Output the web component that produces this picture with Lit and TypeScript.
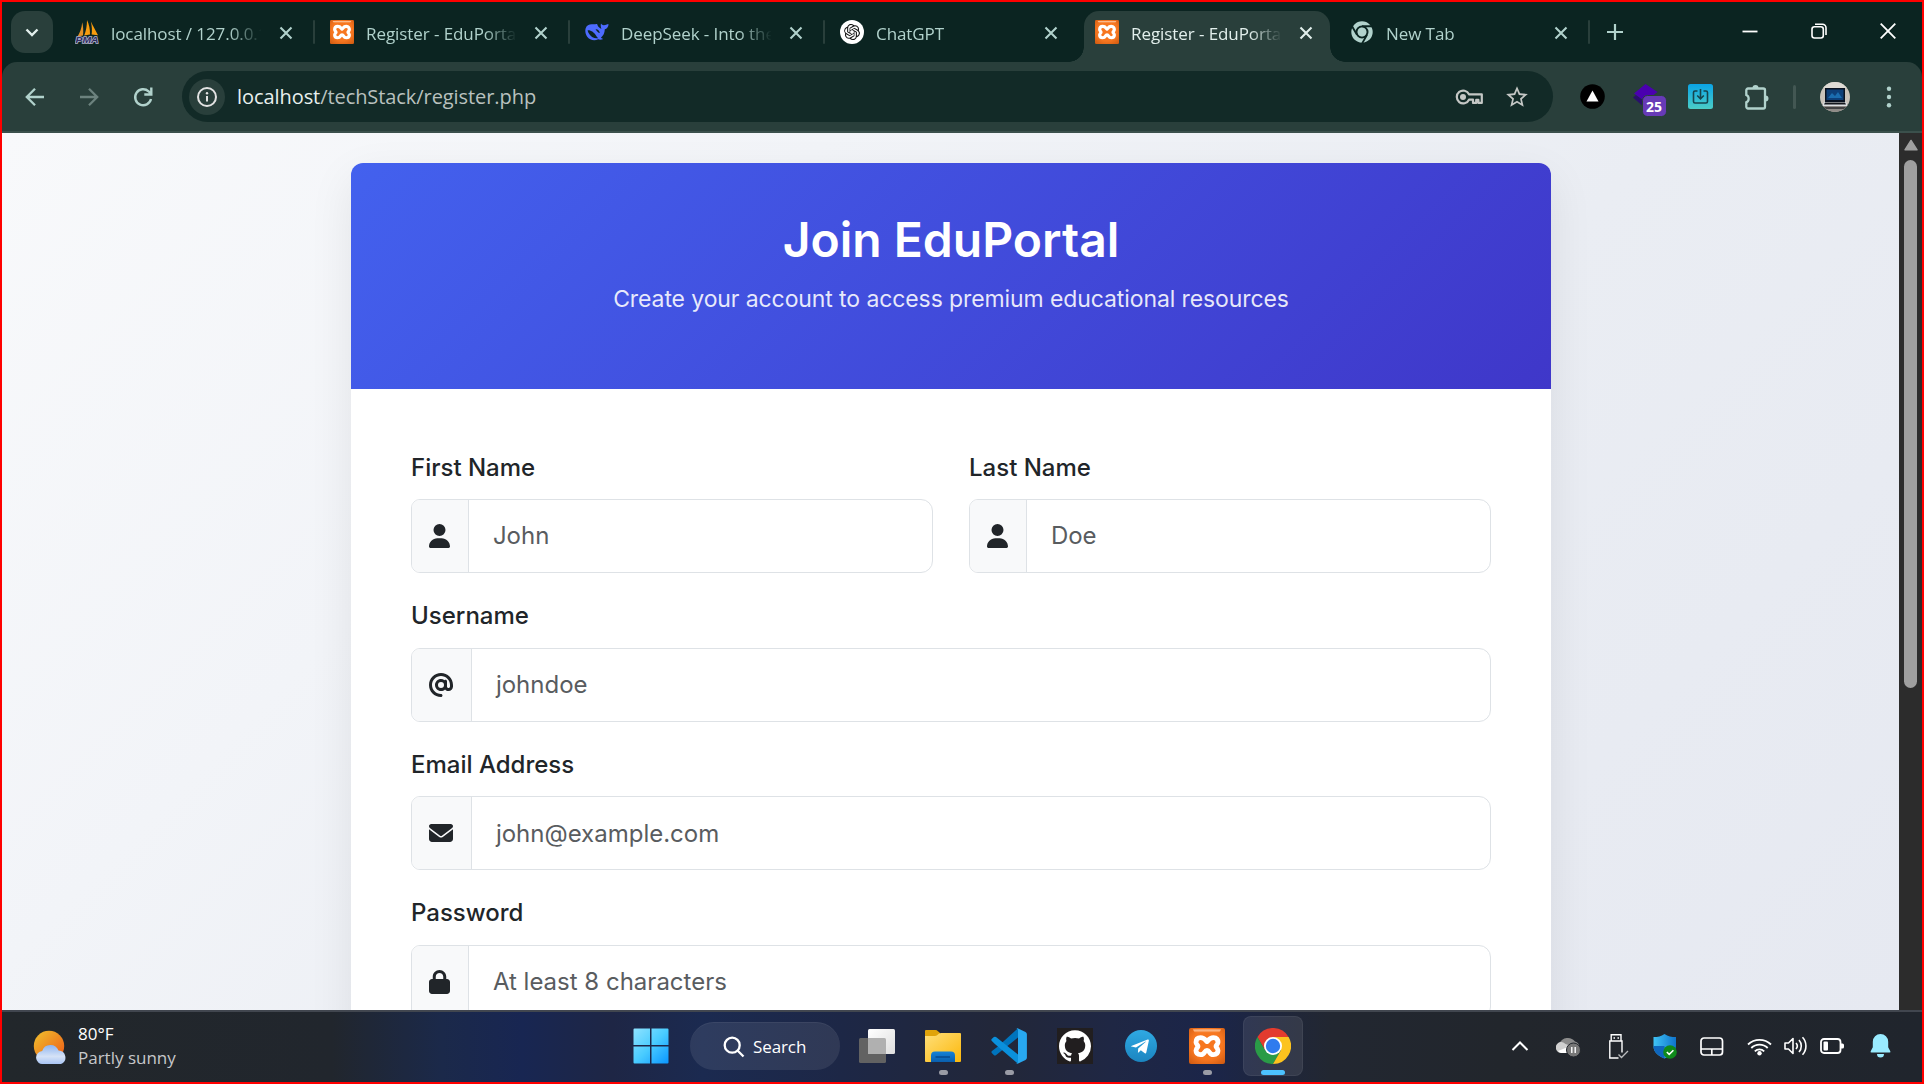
import { LitElement, html, css, svg, nothing } from "lit";
import { customElement, property } from "lit/decorators.js";

const uiFont = css`"Segoe UI", "Open Sans", "Noto Sans", sans-serif`;

const xamppIcon = (size: number) => html`<svg width=${size} height=${size} viewBox="0 0 36 36">
  <defs>
    <radialGradient id="xo" cx="50%" cy="45%" r="70%"><stop offset=".6" stop-color="#f77720" /><stop offset="1" stop-color="#d25c12" /></radialGradient>
    <linearGradient id="xs" x2="0" y2="1"><stop offset="0" stop-color="#fbc9a4" /><stop offset="1" stop-color="#f98a3c" /></linearGradient>
  </defs>
  <rect width="36" height="36" rx="2" fill="url(#xo)" />
  <path d="M4 1.6h28l-1.5 2.6h-25z" fill="url(#xs)" />
  <path d="M18 13.6C16.4 12.6 16 9.6 11.6 9.6C8 9.6 7 12 7 14.2C7 16.4 9 17 9 18.2C9 19.4 7 20.4 7 22.6C7 25 8.4 26.6 11.6 26.6C16.2 26.6 15 22.4 18 22.4S19.8 26.6 24.4 26.6C27.6 26.6 29 25 29 22.6C29 20.4 27 19.4 27 18.2C27 17 29 16.4 29 14.2C29 12 28 9.6 24.4 9.6C20 9.6 19.6 12.6 18 13.6Z" fill="none" stroke="#fff" stroke-width="4.8" stroke-linejoin="round" />
</svg>`;

const pmaIcon = html`<svg width="24" height="24" viewBox="0 0 24 24">
  <path d="M7.2 2.2C6.8 8 4.8 13 2.6 16.4L8 15.6C8.6 11 8.2 6 7.2 2.2Z" fill="#e39128" />
  <path d="M12 0C12 6 11 11 9.2 15.6L15 14.6C15.2 9 14 4 12 0Z" fill="#f89c0e" />
  <path d="M15.8 1.4C17 6 17.2 11 16.6 14.6L23 15.2C21 11 18 6 15.8 1.4Z" fill="#f89c0e" />
  <g font-family="'Liberation Sans', sans-serif" font-size="9.6" font-weight="700" font-style="italic"><text x="0.5" y="23.4" textLength="23" lengthAdjust="spacingAndGlyphs" fill="#2e2c63" stroke="#b4b4cc" stroke-width="1.5" paint-order="stroke">PMA</text></g>
</svg>`;

const deepseekIcon = html`<svg width="24" height="24" viewBox="0 0 24 24">
  <path d="M.6 8.4C1.6 4.9 5 3.7 8.4 4.3C9.9 4.6 10.6 3.7 11.8 4C12.9 4.4 12.3 5.4 13.2 6.4C14.2 7.6 15.6 8.2 16.4 9C15.8 7.4 15.4 5.4 16 3.6C16.8 4.9 17.8 5.4 19 5.3C20.6 5 22 4.2 23.6 4.3C23.4 6.9 22 8.9 19.8 9.3C19.8 12.9 18.2 15.9 15.9 17.7C16.8 18.3 17.6 18.5 18.2 19C16.6 19.9 14.4 19.9 13.2 19.3C9.4 21.3 4.6 20.1 2.2 16.8C.4 14.3-.1 11.1.6 8.4Z" fill="#4d6bfe" />
  <path d="M2.6 10.4C5.6 9.9 9.4 12.6 11 15.6C11.7 16.8 12.2 17.6 13.2 18.2C9.2 18.9 6.4 17 4.6 14.6C3.6 13.2 2.8 11.8 2.6 10.4Z" fill="#0b2421" />
  <path d="M10.6 9.4C12.6 9.1 14.4 10.8 14.8 12.9C13.6 13.1 13.2 12.2 12.3 11.5Z" fill="#0b2421" />
</svg>`;

const chatgptIcon = html`<svg width="24" height="24" viewBox="0 0 24 24">
  <circle cx="12" cy="12" r="12" fill="#fff" />
  <g transform="translate(4 4) scale(.667)"><path fill="#111" d="M22.2819 9.8211a5.9847 5.9847 0 0 0-.5157-4.9108 6.0462 6.0462 0 0 0-6.5098-2.9A6.0651 6.0651 0 0 0 4.9807 4.1818a5.9847 5.9847 0 0 0-3.9977 2.9 6.0462 6.0462 0 0 0 .7427 7.0966 5.98 5.98 0 0 0 .511 4.9107 6.051 6.051 0 0 0 6.5146 2.9001A5.9847 5.9847 0 0 0 13.2599 24a6.0557 6.0557 0 0 0 5.7718-4.2058 5.9894 5.9894 0 0 0 3.9977-2.9001 6.0557 6.0557 0 0 0-.7475-7.0729zm-9.022 12.6081a4.4755 4.4755 0 0 1-2.8764-1.0408l.1419-.0804 4.7783-2.7582a.7948.7948 0 0 0 .3927-.6813v-6.7369l2.02 1.1686a.071.071 0 0 1 .038.052v5.5826a4.504 4.504 0 0 1-4.4945 4.4944zm-9.6607-4.1254a4.4708 4.4708 0 0 1-.5346-3.0137l.142.0852 4.783 2.7582a.7712.7712 0 0 0 .7806 0l5.8428-3.3685v2.3324a.0804.0804 0 0 1-.0332.0615L9.74 19.9502a4.4992 4.4992 0 0 1-6.1408-1.6464zM2.3408 7.8956a4.485 4.485 0 0 1 2.3655-1.9728V11.6a.7664.7664 0 0 0 .3879.6765l5.8144 3.3543-2.0201 1.1685a.0757.0757 0 0 1-.071 0l-4.8303-2.7865A4.504 4.504 0 0 1 2.3408 7.872zm16.5963 3.8558L13.1038 8.364 15.1192 7.2a.0757.0757 0 0 1 .071 0l4.8303 2.7913a4.4944 4.4944 0 0 1-.6765 8.1042v-5.6772a.79.79 0 0 0-.407-.667zm2.0107-3.0231l-.142-.0852-4.7735-2.7818a.7759.7759 0 0 0-.7854 0L9.409 9.2297V6.8974a.0662.0662 0 0 1 .0284-.0615l4.8303-2.7866a4.4992 4.4992 0 0 1 6.6802 4.66zM8.3065 12.863l-2.02-1.1638a.0804.0804 0 0 1-.038-.0567V6.0742a4.4992 4.4992 0 0 1 7.3757-3.4537l-.142.0805L8.704 5.459a.7948.7948 0 0 0-.3927.6813zm1.0976-2.3654l2.602-1.4998 2.6069 1.4998v2.9994l-2.5974 1.4997-2.6067-1.4997Z" /></g>
</svg>`;

const chromeMonoIcon = html`<svg width="24" height="24" viewBox="0 0 24 24">
  <circle cx="12" cy="12" r="10.7" fill="#b1d2cc" />
  <circle cx="12" cy="12" r="5.5" fill="#b1d2cc" stroke="#0b2421" stroke-width="2" />
  <path d="M12 6.2H22.6M7 14.9L1.9 6M17 14.9L12 23.6" stroke="#0b2421" stroke-width="1.9" fill="none" />
  <circle cx="12" cy="12" r="4.2" fill="#b1d2cc" />
</svg>`;

const closeX = html`<svg width="24" height="24" viewBox="0 0 24 24"><path d="M6.5 6.5l11 11M17.5 6.5l-11 11" stroke="currentColor" stroke-width="2.1" fill="none" /></svg>`;

@customElement("browser-tab")
class BrowserTab extends LitElement {
  @property() label = "";
  @property({ attribute: false }) icon: unknown = nothing;
  @property({ type: Boolean, reflect: true }) active = false;
  @property({ type: Boolean }) divider = false;

  static styles = css`
    :host { display: flex; width: 255px; height: 60px; flex: none; box-sizing: border-box; color: #b1d2cc; font-family: ${uiFont}; }
    .body { display: flex; align-items: center; flex: 1; height: 42px; margin: 9px 4px 9px 5px; padding-left: 11px; }
    :host([active]) { color: #e2efec; }
    :host([active]) .body { position: relative; height: 51px; margin-bottom: 0; background: #293f3b; border-radius: 15px 15px 0 0; padding-bottom: 9px; box-sizing: border-box; }
    :host([active]) .body::before, :host([active]) .body::after { content: ""; position: absolute; bottom: 0; width: 15px; height: 15px; }
    :host([active]) .body::before { left: -15px; background: radial-gradient(circle at 0 0, transparent 14.5px, #293f3b 15px); }
    :host([active]) .body::after { right: -15px; background: radial-gradient(circle at 100% 0, transparent 14.5px, #293f3b 15px); }
    .icon { display: flex; width: 24px; flex: none; }
    .label { width: 150px; margin-left: 12px; margin-top: 3px; font-size: 17px; line-height: 24px; letter-spacing: -0.08px; white-space: nowrap; overflow: hidden; -webkit-mask-image: linear-gradient(90deg, #000 118px, transparent 151px); mask-image: linear-gradient(90deg, #000 118px, transparent 151px); }
    .close { display: flex; margin-left: 13px; margin-top: 1px; }
    .line { width: 2px; height: 24px; margin: 18px -1px 0 -1px; background: #293f3b; border-radius: 1px; position: relative; }
  `;

  render() {
    return html`<div class="body"><span class="icon">${this.icon}</span><span class="label">${this.label}</span><span class="close">${closeX}</span></div>
      ${this.divider ? html`<span class="line"></span>` : nothing}`;
  }
}

const tabs = [
  { label: "localhost / 127.0.0.1", icon: pmaIcon, divider: true },
  { label: "Register - EduPortal", icon: xamppIcon(24), divider: true },
  { label: "DeepSeek - Into the", icon: deepseekIcon, divider: true },
  { label: "ChatGPT", icon: chatgptIcon },
  { label: "Register - EduPortal", icon: xamppIcon(24), active: true },
  { label: "New Tab", icon: chromeMonoIcon, divider: true },
];

@customElement("browser-chrome")
class BrowserChrome extends LitElement {
  static styles = css`
    :host { display: block; height: 131px; background: #0b2421; font-family: ${uiFont}; }
    svg { display: block; flex: none; }
    .strip { display: flex; height: 60px; }
    .menu { width: 42px; height: 42px; margin: 9px 6px 0 9px; border-radius: 14px; background: #293f3b; display: flex; align-items: center; justify-content: center; color: #e2efec; flex: none; }
    .plus { margin: 18px 0 0 14px; color: #b1d2cc; }
    .win { display: flex; margin-left: auto; color: #fff; }
    .win span { width: 69px; height: 58px; display: flex; align-items: center; justify-content: center; }
    .bar { display: flex; align-items: center; height: 71px; box-sizing: border-box; background: #293f3b; border-radius: 15px 15px 0 0; border-bottom: 2px solid #3b504c; padding-left: 18px; color: #b1d2cc; }
    .nav { display: flex; width: 162px; gap: 24px; }
    .nav svg { width: 30px; height: 30px; }
    .omni { display: flex; align-items: center; width: 1371px; height: 51px; border-radius: 26px; background: #122a27; flex: none; box-sizing: border-box; padding: 0 23px 0 7px; color: #c4c7c5; }
    .info { width: 36px; height: 36px; border-radius: 50%; background: #293f3b; display: flex; align-items: center; justify-content: center; color: #e3e3e3; }
    .url { margin-left: 12px; font-size: 20px; line-height: 30px; letter-spacing: -0.07px; color: #b9c1bf; flex: 1; white-space: nowrap; }
    .url b { font-weight: 400; color: #e8f0ee; }
    .key { margin-right: 21px; }
    .ext { display: flex; align-items: center; flex: 1; }
    .e1 { margin-left: 27px; }
    .e2 { margin-left: 28px; margin-top: 6px; }
    .e3 { margin-left: 21px; }
    .e4 { margin-left: 30px; }
    .sep { width: 3px; height: 24px; background: #435753; margin-left: 24px; border-radius: 2px; }
    .e5 { margin-left: 24px; }
    .e6 { margin-left: 36px; }
  `;

  render() {
    return html`
      <div class="strip">
        <div class="menu"><svg width="24" height="24" viewBox="0 0 24 24"><path d="M6.5 9.5l5.5 5.5 5.5-5.5" stroke="currentColor" stroke-width="2.4" fill="none" /></svg></div>
        ${tabs.map((t) => html`<browser-tab .label=${t.label} .icon=${t.icon} ?active=${!!t.active} ?divider=${!!t.divider}></browser-tab>`)}
        <svg class="plus" width="24" height="24" viewBox="0 0 24 24"><path d="M12 4v16M4 12h16" stroke="currentColor" stroke-width="2.2" /></svg>
        <div class="win">
          <span><svg width="16" height="16" viewBox="0 0 16 16"><path d="M.5 8.5h15" stroke="currentColor" stroke-width="1.8" /></svg></span>
          <span><svg width="16" height="16" viewBox="0 0 16 16" fill="none" stroke="currentColor" stroke-width="1.6"><rect x="1" y="3.7" width="11.3" height="11.3" rx="2.5" /><path d="M4 1.2h7.500a3.500 3.500 0 0 1 3.500 3.500V12" /></svg></span>
          <span><svg width="16" height="16" viewBox="0 0 16 16"><path d="M.7 .7l14.600 14.600M15.300 .7L.7 15.300" stroke="currentColor" stroke-width="1.8" /></svg></span>
        </div>
      </div>
      <div class="bar">
        <div class="nav">
          <svg viewBox="0 0 30 30" fill="none" stroke="currentColor" stroke-width="2.3"><path d="M24 15H7.500M15 6.800L6.800 15l8.200 8.200" /></svg>
          <svg viewBox="0 0 30 30" fill="none" stroke="#6c827e" stroke-width="2.3"><path d="M6 15h16.500M15 6.800l8.200 8.200-8.200 8.200" /></svg>
          <svg viewBox="0 0 30 30" fill="none" stroke="currentColor" stroke-width="2.4"><path d="M23 17a8 8 0 1 1-2.400-7.700l2 2.200M23.300 5.500v7h-7" /></svg>
        </div>
        <div class="omni">
          <span class="info"><svg width="22" height="22" viewBox="0 0 22 22"><circle cx="11" cy="11" r="9" fill="none" stroke="currentColor" stroke-width="2" /><path d="M11 10v5.500" stroke="currentColor" stroke-width="2" /><circle cx="11" cy="7.2" r="1.2" fill="currentColor" /></svg></span>
          <span class="url"><b>localhost</b>/techStack/register.php</span>
          <svg class="key" width="28" height="18" viewBox="0 0 28 18" fill="none" stroke="currentColor" stroke-width="2.2"><path d="M14 6.300A6.400 6.400 0 1 0 14 11.700H18V14.900H21.200V11.900H23.400V14.900H26.800V6.300Z" stroke-linejoin="round" /><circle cx="8" cy="9" r="3" fill="currentColor" stroke="none" /></svg>
          <svg width="26" height="26" viewBox="0 0 24 24"><path fill="currentColor" d="M22 9.240l-7.190-.62L12 2 9.190 8.630 2 9.240l5.460 4.730L5.820 21 12 17.270 18.180 21l-1.630-7.030L22 9.240zM12 15.400l-3.760 2.270 1-4.280-3.320-2.880 4.380-.38L12 6.100l1.710 4.040 4.380.38-3.320 2.880 1 4.280L12 15.400z" /></svg>
        </div>
        <div class="ext">
          <svg class="e1" width="25" height="25" viewBox="0 0 25 25"><circle cx="12.5" cy="12.5" r="12.3" /><path d="M12.500 6.500l6 11h-12z" fill="#fff" /></svg>
          <svg class="e2" width="34" height="34" viewBox="0 0 34 34"><path d="M0 14.500L3 12l12 9 5-3-8 7z" fill="#2a0f6e" /><path d="M1 10.500L12.500 1 24.500 9 12 18.500z" fill="#4a00b0" /><rect x="9.5" y="12.5" width="24" height="21" rx="5" fill="#673ab7" stroke="#293f3b" /><text x="21" y="28.6" text-anchor="middle" font-family="'Segoe UI', 'Open Sans', sans-serif" font-size="14" font-weight="700" fill="#fff">25</text></svg>
          <svg class="e3" width="25" height="25" viewBox="0 0 25 25"><defs><linearGradient id="g" x2="0" y2="1"><stop offset="0" stop-color="#0aa4e6" /><stop offset="1" stop-color="#4bcdc6" /></linearGradient></defs><rect width="25" height="25" rx="2.5" fill="url(#g)" /><path d="M9.500 7H7a1.500 1.500 0 0 0-1.500 1.500v9A1.500 1.500 0 0 0 7 19h11a1.500 1.500 0 0 0 1.500-1.500v-9A1.500 1.500 0 0 0 18 7h-2.500M12.500 5v9.500M9.200 11.500l3.300 3.300 3.300-3.300" fill="none" stroke="#17444e" stroke-width="1.6" /></svg>
          <svg class="e4" width="26" height="26" viewBox="0 0 26 26"><path d="M3.300 6.200a1.700 1.700 0 0 1 1.700-1.700H20.300a1.700 1.700 0 0 1 1.700 1.700V22.800a1.700 1.700 0 0 1-1.700 1.700H5a1.700 1.700 0 0 1-1.700-1.700V18.300a4 4 0 0 0 0-7.300Z" fill="none" stroke="currentColor" stroke-width="2.3" /><path d="M9.500 4a3 3 0 0 1 6 0zM22.500 11.500a3 3 0 0 1 0 6z" fill="currentColor" /></svg>
          <span class="sep"></span>
          <svg class="e5" width="30" height="30" viewBox="0 0 30 30"><defs><clipPath id="c"><circle cx="15" cy="15" r="15" /></clipPath></defs><g clip-path="url(#c)"><rect width="30" height="30" fill="#c9c3bb" /><rect y="0" width="30" height="6" fill="#dedad4" /><rect y="22" width="30" height="8" fill="#8f8b87" /><rect x="5" y="6" width="20" height="14" fill="#0a1220" /><rect x="6.5" y="7.5" width="17" height="10.5" fill="#0d3f78" /><path d="M8 16l4-5 3 3 3-4 4 6z" fill="#1a6cae" /><path d="M4 20h22l2 4H2z" fill="#dfe0e3" /><path d="M5 20.500h20l1 2H4z" fill="#15171c" /><path d="M2 26h26" stroke="#2a2a2c" stroke-width="1.5" /></g></svg>
          <svg class="e6" width="6" height="24" viewBox="0 0 6 24" fill="currentColor"><circle cx="3" cy="3.7" r="2.2" /><circle cx="3" cy="12" r="2.2" /><circle cx="3" cy="20.3" r="2.2" /></svg>
        </div>
      </div>`;
  }
}

const fieldIcons: Record<string, { w: number; path: string }> = {
  user: { w: 448, path: "M224 256A128 128 0 1 0 224 0a128 128 0 1 0 0 256zm-45.7 48C79.8 304 0 383.8 0 482.3C0 498.7 13.3 512 29.7 512H418.3c16.4 0 29.7-13.3 29.7-29.7C448 383.8 368.2 304 269.7 304H178.3z" },
  at: { w: 512, path: "M256 64C150 64 64 150 64 256s86 192 192 192c17.7 0 32 14.3 32 32s-14.3 32-32 32C114.6 512 0 397.4 0 256S114.6 0 256 0S512 114.6 512 256v32c0 53-43 96-96 96c-29.3 0-55.6-13.2-73.2-33.9C320 371.1 289.5 384 256 384c-70.7 0-128-57.3-128-128s57.3-128 128-128c27.9 0 53.7 8.9 74.7 24.1c5.7-5 13.1-8.1 21.3-8.1c17.7 0 32 14.3 32 32v80 32c0 17.7 14.3 32 32 32s32-14.3 32-32V256c0-106-86-192-192-192zm64 192a64 64 0 1 0-128 0 64 64 0 1 0 128 0z" },
  envelope: { w: 512, path: "M48 64C21.5 64 0 85.5 0 112c0 15.1 7.1 29.3 19.2 38.4L236.8 313.6c11.4 8.5 27 8.5 38.4 0L492.8 150.4c12.1-9.1 19.2-23.3 19.2-38.4c0-26.5-21.5-48-48-48H48zM0 176V384c0 35.3 28.7 64 64 64H448c35.3 0 64-28.7 64-64V176L294.4 339.2c-22.8 17.1-54 17.1-76.8 0L0 176z" },
  lock: { w: 448, path: "M144 144v48H304V144c0-44.2-35.8-80-80-80s-80 35.8-80 80zM80 192V144C80 64.5 144.5 0 224 0s144 64.5 144 144v48h16c35.3 0 64 28.7 64 64V448c0 35.3-28.7 64-64 64H64c-35.3 0-64-28.7-64-64V256c0-35.3 28.7-64 64-64H80z" },
};

@customElement("form-field")
class FormField extends LitElement {
  @property() label = "";
  @property() hint = "";
  @property() icon = "user";

  static styles = css`
    :host { display: block; flex: 1; font-family: Inter, sans-serif; font-size: 24px; }
    .label { font-weight: 500; line-height: 36px; color: #212529; margin-bottom: 13.4px; }
    .group { display: flex; height: 74px; box-sizing: border-box; border: 1px solid #dee2e6; border-radius: 9px 12px 12px 9px; overflow: hidden; background: #fff; }
    .addon { display: flex; align-items: center; padding: 0 17.500px 0 17.400px; background: #f8f9fa; border-right: 1px solid #dee2e6; }
    .hint { display: flex; align-items: center; padding-left: 24px; color: #595c5f; }
  `;

  render() {
    const ic = fieldIcons[this.icon];
    return html`<div class="label">${this.label}</div>
      <div class="group"><span class="addon"><svg width=${(ic.w / 512) * 24} height="24" viewBox="0 0 ${ic.w} 512">${svg`<path d=${ic.path} fill="#212529"/>`}</svg></span><span class="hint">${this.hint}</span></div>`;
  }
}

@customElement("register-page")
class RegisterPage extends LitElement {
  static styles = css`
    :host { display: flex; flex: 1; min-height: 0; overflow: hidden; font-family: Inter, sans-serif; }
    .view { flex: 1; overflow: hidden; background: linear-gradient(135deg, #f8f9fb 0%, #f2f4f8 30%, #eaedf3 60%, #e6e9f1 100%); padding: 30px 348px 0 349px; }
    .card { width: 1200px; height: 1400px; background: #fff; border-radius: 12px; box-shadow: 0 15px 45px rgba(0, 0, 0, 0.08); overflow: hidden; }
    header { height: 226px; box-sizing: border-box; padding-top: 48px; text-align: center; background: linear-gradient(135deg, #4361ee, #3f37c9); color: #fff; }
    h1 { margin: 0 0 12px; font-size: 48px; line-height: 57.6px; font-weight: 600; }
    p { margin: 0; font-size: 23px; line-height: 36px; letter-spacing: -0.1px; color: rgba(255, 255, 255, 0.88); }
    form { display: flex; flex-direction: column; gap: 25.2px; padding: 60.6px 60px; }
    .row { display: flex; gap: 36px; }
    .scroll { width: 23px; background: #2c2c2c; display: flex; flex-direction: column; align-items: center; }
    .scroll svg { display: block; margin-top: 6px; }
    .thumb { width: 13px; height: 528px; margin-top: 9px; border-radius: 7px; background: #9f9f9f; }
  `;

  render() {
    return html`
      <div class="view"><div class="card">
        <header><h1>Join EduPortal</h1><p>Create your account to access premium educational resources</p></header>
        <form>
          <div class="row"><form-field label="First Name" hint="John" icon="user"></form-field><form-field label="Last Name" hint="Doe" icon="user"></form-field></div>
          <form-field label="Username" hint="johndoe" icon="at"></form-field>
          <form-field label="Email Address" hint="john@example.com" icon="envelope"></form-field>
          <form-field label="Password" hint="At least 8 characters" icon="lock"></form-field>
        </form>
      </div></div>
      <div class="scroll"><svg width="14" height="12" viewBox="0 0 14 12"><path d="M7 1.500L13 10.800H1z" fill="#9f9f9f" stroke="#9f9f9f" stroke-width="1.5" stroke-linejoin="round" /></svg><div class="thumb"></div></div>`;
  }
}

const startIcon = html`<svg width="36" height="36" viewBox="0 0 36 36"><defs><linearGradient id="s" x2="1" y2="1"><stop offset="0" stop-color="#8fe3ff" /><stop offset=".5" stop-color="#4accff" /><stop offset="1" stop-color="#0a96ff" /></linearGradient></defs><path d="M1.500 .5h15.500v16.500H.5V1.500a1 1 0 0 1 1-1zM18.500 .5h16a1 1 0 0 1 1 1v15.500h-17zM.5 18.500h16.500v17h-15.500a1 1 0 0 1-1-1zM18.500 18.500h17v16a1 1 0 0 1-1 1h-16z" fill="url(#s)" /></svg>`;
const taskViewIcon = html`<svg width="36" height="34" viewBox="0 0 36 34"><defs><linearGradient id="a" x2="1" y2="1"><stop offset="0" stop-color="#fff" /><stop offset="1" stop-color="#dedede" /></linearGradient></defs><rect y="9" width="27" height="25" rx="1.5" fill="#626262" /><rect x="9" y="0" width="27" height="25" rx="1.5" fill="url(#a)" /><path d="M9 9h16.500a1.500 1.500 0 0 1 1.500 1.500V25H9z" fill="#b0b0b0" /></svg>`;
const folderIcon = html`<svg width="36" height="32" viewBox="0 0 36 32"><defs><linearGradient id="f" x2="1" y2="1"><stop offset="0" stop-color="#ffdf7a" /><stop offset="1" stop-color="#fcb80b" /></linearGradient><linearGradient id="b" x2="0" y2="1"><stop offset="0" stop-color="#1683d8" /><stop offset="1" stop-color="#0a5fae" /></linearGradient></defs><path d="M0 1a1 1 0 0 1 1-1h9.500c2 0 3 2 4.500 3v4H0z" fill="#e0a30a" /><path d="M0 6h10c3 0 3-3 6-3h19a1 1 0 0 1 1 1v27a1 1 0 0 1-1 1H1a1 1 0 0 1-1-1z" fill="url(#f)" /><path d="M6 32V25.500a4 4 0 0 1 4-4h16a4 4 0 0 1 4 4V32z" fill="url(#b)" /><path d="M10.500 27h14.500" stroke="#084a8e" stroke-width="1.5" /></svg>`;
const vscodeIcon = html`<svg width="36" height="36" viewBox="0 0 36 36"><path d="M27 9.500V.3L7.200 18.200 1 22.900a1.500 1.500 0 0 0-.2 2l2 2.100c.6.600 1.400.700 2.100.2z" fill="#0074bd" /><path d="M27 26.500v9.200L3.900 16 .9 13a1.500 1.500 0 0 1 0-2.200l2-1.700a1.700 1.700 0 0 1 2.100 0z" fill="#0a90dc" /><path d="M26.600.3L34.500 4a2.500 2.500 0 0 1 1.400 2.200V29.800a2.500 2.500 0 0 1-1.400 2.200L26.600 35.700c-.9.300-1.600.100-2.100-.5 1 .7 2.500 0 2.500-1.300V2.100C27 .8 25.500.1 24.500.8c.5-.6 1.200-.8 2.100-.5z" fill="#28a8f0" /></svg>`;
const githubIcon = html`<svg width="36" height="36" viewBox="0 0 36 36"><rect width="36" height="36" fill="#211e1f" /><g transform="translate(2 2.2)"><path transform="scale(2)" fill="#fff" d="M8 0C3.58 0 0 3.58 0 8c0 3.54 2.29 6.53 5.47 7.59.4.07.55-.17.55-.38 0-.19-.01-.82-.01-1.49-2.01.37-2.53-.49-2.69-.94-.09-.23-.48-.94-.82-1.13-.28-.15-.68-.52-.01-.53.63-.01 1.08.58 1.23.82.72 1.21 1.87.87 2.33.66.07-.52.28-.87.51-1.07-1.78-.2-3.64-.89-3.64-3.95 0-.87.31-1.59.82-2.15-.08-.2-.36-1.02.08-2.12 0 0 .67-.21 2.2.82.64-.18 1.32-.27 2-.27s1.36.09 2 .27c1.53-1.04 2.2-.82 2.2-.82.44 1.1.16 1.92.08 2.12.51.56.82 1.27.82 2.15 0 3.07-1.87 3.75-3.65 3.95.29.25.54.73.54 1.48 0 1.07-.01 1.93-.01 2.2 0 .21.15.46.55.38A8.01 8.01 0 0 0 16 8c0-4.42-3.58-8-8-8z" /></g></svg>`;
const telegramIcon = html`<svg width="32" height="32" viewBox="0 0 32 32"><defs><linearGradient id="t" x2="0" y2="1"><stop offset="0" stop-color="#2fa9e3" /><stop offset="1" stop-color="#1b85c0" /></linearGradient></defs><circle cx="16" cy="16" r="16" fill="url(#t)" /><path d="M6.300 15.900L22.600 9.500c.8-.3 1.500.2 1.200 1.400L21.300 22.600c-.2.900-.8 1.100-1.500.7l-4-3-2 2c-.3.300-.5.500-.9.500l.3-4.200 7.400-6.700c.3-.3 0-.5-.5-.2l-9.100 5.800-4.500-1.100c-.8-.2-.8-.4-.2-.5z" fill="#fff" /></svg>`;
const chromeIcon = html`<svg width="36" height="36" viewBox="0 0 36 36"><path d="M18 9H33.600A18 18 0 0 0 2.400 9L10.200 22.500z" fill="#e33b2e" /><path d="M10.200 22.500L2.400 9A18 18 0 0 0 18 36L25.800 22.500z" fill="#2a9b47" /><path d="M25.800 22.500L18 36A18 18 0 0 0 33.600 9H18z" fill="#fcc31e" /><circle cx="18" cy="18" r="9" fill="#fff" /><circle cx="18" cy="18" r="7.2" fill="#2f7bee" /></svg>`;

const apps = [
  { icon: taskViewIcon }, { icon: folderIcon, open: true }, { icon: vscodeIcon, open: true }, { icon: githubIcon },
  { icon: telegramIcon }, { icon: xamppIcon(36), open: true }, { icon: chromeIcon, open: true, active: true },
];

@customElement("task-bar")
class TaskBar extends LitElement {
  static styles = css`
    :host { display: grid; grid-template-columns: 617px 1fr 411px; height: 72px; box-sizing: border-box; border-top: 2px solid #41464f; color: #fff; font-family: ${uiFont}; background: linear-gradient(90deg, #22272b 0, #21262d 330px, #1b294a 440px, #182652 520px, #1e2645 610px, #1b2a50 700px, #1d2746 840px, #222739 1000px, #1f2744 1110px, #1b2549 1210px, #222731 1330px, #22262c 1500px, #20252d 100%); }
    svg { display: block; flex: none; }
    .weather { display: flex; align-items: center; gap: 10px; padding-left: 31px; font-size: 17px; line-height: 24px; margin-top: -3px; }
    .weather small { display: block; font-size: 17px; color: #c6c8ca; }
    .apps { display: flex; align-items: center; padding-bottom: 2px; }
    .start { margin: 0 21px 0 14px; }
    .search { display: flex; align-items: center; gap: 8px; width: 150px; height: 48px; margin: 0 4px 0 0; padding-left: 33px; box-sizing: border-box; border-radius: 24px; background: rgba(255, 255, 255, 0.085); border-top: 1px solid rgba(255, 255, 255, 0.06); font-size: 17px; letter-spacing: -0.1px; }
    .app { width: 60px; height: 60px; box-sizing: border-box; margin: 0 3px; display: flex; align-items: center; justify-content: center; border-radius: 8px; position: relative; flex: none; }
    .active { background: rgba(255, 255, 255, 0.09); border: 1px solid rgba(255, 255, 255, 0.06); }
    .mark { position: absolute; left: 50%; bottom: 1px; width: 9px; height: 5px; margin-left: -4.5px; border-radius: 3px; background: #9a9ca6; }
    .active .mark { width: 24px; margin-left: -12px; bottom: 0; background: #4cc2ff; }
    .tray { display: flex; align-items: center; padding-bottom: 2px; }
    .chevron { margin-right: 27px; }
    .cloud { margin-right: 28px; }
    .usb { margin-right: 24px; }
    .shield { margin-right: 23px; }
    .pad { margin-right: 23px; }
    .wifi { margin-right: 12px; }
    .sound { margin-right: 12px; }
    .battery { margin-right: 26px; }
  `;

  render() {
    return html`
      <div class="weather">
        <svg width="35" height="36" viewBox="0 0 35 36"><defs><linearGradient id="w" x2="1" y2="1"><stop offset="0" stop-color="#f0c22e" /><stop offset=".8" stop-color="#ee6c1a" /></linearGradient><linearGradient id="v" x2="0" y2="1"><stop offset="0" stop-color="#8db4f0" /><stop offset=".6" stop-color="#d5e2f6" /><stop offset="1" stop-color="#a9c5f4" /></linearGradient></defs><circle cx="16" cy="18" r="15.2" fill="url(#w)" /><path d="M10 36a6.500 6.500 0 0 1-.8-13A8.600 8.600 0 0 1 25.500 22.500 7 7 0 0 1 28 36z" fill="url(#v)" /></svg>
        <div>80°F<small>Partly sunny</small></div>
      </div>
      <div class="apps">
        <span class="start">${startIcon}</span>
        <div class="search"><svg width="22" height="22" viewBox="0 0 22 22" fill="none" stroke="#fff" stroke-width="2.3"><circle cx="9.2" cy="9.2" r="7.5" /><path d="M14.500 14.500l6 6" /></svg>Search</div>
        ${apps.map((a) => html`<span class="app ${a.active ? "active" : ""}">${a.icon}${a.open ? html`<i class="mark"></i>` : nothing}</span>`)}
      </div>
      <div class="tray">
        <svg class="chevron" width="18" height="12" viewBox="0 0 18 12"><path d="M1.500 10L9 2.500l7.500 7.500" fill="none" stroke="#fff" stroke-width="2" /></svg>
        <svg class="cloud" width="25" height="22" viewBox="0 0 25 22"><path d="M5 18A5 5 0 0 1 3.500 8.500 9 9 0 0 1 19 6.500 6 6 0 0 1 19 18z" fill="#8c8c8c" /><path d="M5 18A5.500 5.500 0 1 1 9.500 9l8 3-3 6z" fill="#d0d0d0" /><path d="M2 16l10-4 3 6H5z" fill="#fff" /><circle cx="17.5" cy="15" r="7" fill="#777" stroke="#22262c" /><path d="M15.800 12v6M19.200 12v6" stroke="#fff" stroke-width="1.4" /></svg>
        <svg class="usb" width="20" height="25" viewBox="0 0 20 25" fill="none" stroke="#fff" stroke-width="1.4"><path d="M2.200 7V.8H12V7M9.500 24H.8V7H13V18.500" /><path d="M9.500 20.500l3 3L19 17" stroke="#b9bbbd" /><path d="M4.500 4H6M8.500 4H10" /></svg>
        <svg class="shield" width="24" height="25" viewBox="0 0 24 25"><defs><linearGradient id="h" x2="1" y2="0"><stop offset="0" stop-color="#3fc3f5" /><stop offset="1" stop-color="#0f74cc" /></linearGradient></defs><path d="M11.500 0C15 2.500 18.500 3 23 3v9c0 6-5 10-11.500 12.500C5 22 .5 18 .5 12V3C5 3 8 2.500 11.500 0z" fill="url(#h)" /><path d="M.5 12h11v12.500C5 22 .5 18 .5 12z" fill="#0f66bd" /><circle cx="17" cy="18" r="6.8" fill="#0f8a1b" /><path d="M13.800 18l2.400 2.400 4.200-4.200" fill="none" stroke="#fff" stroke-width="1.5" /></svg>
        <svg class="pad" width="24" height="19" viewBox="0 0 24 19" fill="none" stroke="#fff" stroke-width="1.7"><rect x="1" y="1" width="21.5" height="17" rx="3" /><path d="M1 12h21.500M11.800 12v6" /></svg>
        <svg class="wifi" width="25" height="19" viewBox="0 0 25 19" fill="none" stroke="#fff" stroke-width="1.8"><path d="M1 7.500a16.500 16.500 0 0 1 23 0M4.300 11a11.500 11.500 0 0 1 16.400 0M7.800 14.300a6.800 6.800 0 0 1 9.400 0" /><circle cx="12.5" cy="16.3" r="2.2" fill="#fff" stroke="none" /></svg>
        <svg class="sound" width="24" height="20" viewBox="0 0 24 20" fill="none" stroke="#fff" stroke-width="1.6"><path d="M1 7h3.500L9 2.500v15L4.500 13H1z" stroke-linejoin="round" /><path d="M12 7a4.500 4.500 0 0 1 0 6M15 4a9 9 0 0 1 0 12M18.500 1.200a13 13 0 0 1 0 17.600" /></svg>
        <svg class="battery" width="24" height="16" viewBox="0 0 24 16"><rect x="1" y="1" width="19.5" height="14" rx="3" fill="none" stroke="#fff" stroke-width="1.8" /><rect x="3.5" y="3.5" width="4.5" height="9" rx="1" fill="#fff" /><path d="M21 5.500h1.500a1.500 1.500 0 0 1 1.500 1.500v2a1.500 1.500 0 0 1-1.500 1.500H21z" fill="#fff" /></svg>
        <svg width="21" height="24" viewBox="0 0 21 24"><path d="M10.500 0a7.700 7.700 0 0 1 7.700 7.700v5.500L20.300 17.200a.9.900 0 0 1-.8 1.300h-18a.9.900 0 0 1-.8-1.300L2.800 13.200V7.700A7.700 7.700 0 0 1 10.500 0zM7 20h7a3.500 3.500 0 0 1-7 0z" fill="#99ebff" /></svg>
      </div>`;
  }
}

@customElement("app-root")
class AppRoot extends LitElement {
  static styles = css`
    :host { display: flex; flex-direction: column; width: 1924px; height: 1084px; box-sizing: border-box; border: 2px solid #f00; overflow: hidden; background: #0b2421; }
  `;
  render() {
    return html`<browser-chrome></browser-chrome><register-page></register-page><task-bar></task-bar>`;
  }
}
